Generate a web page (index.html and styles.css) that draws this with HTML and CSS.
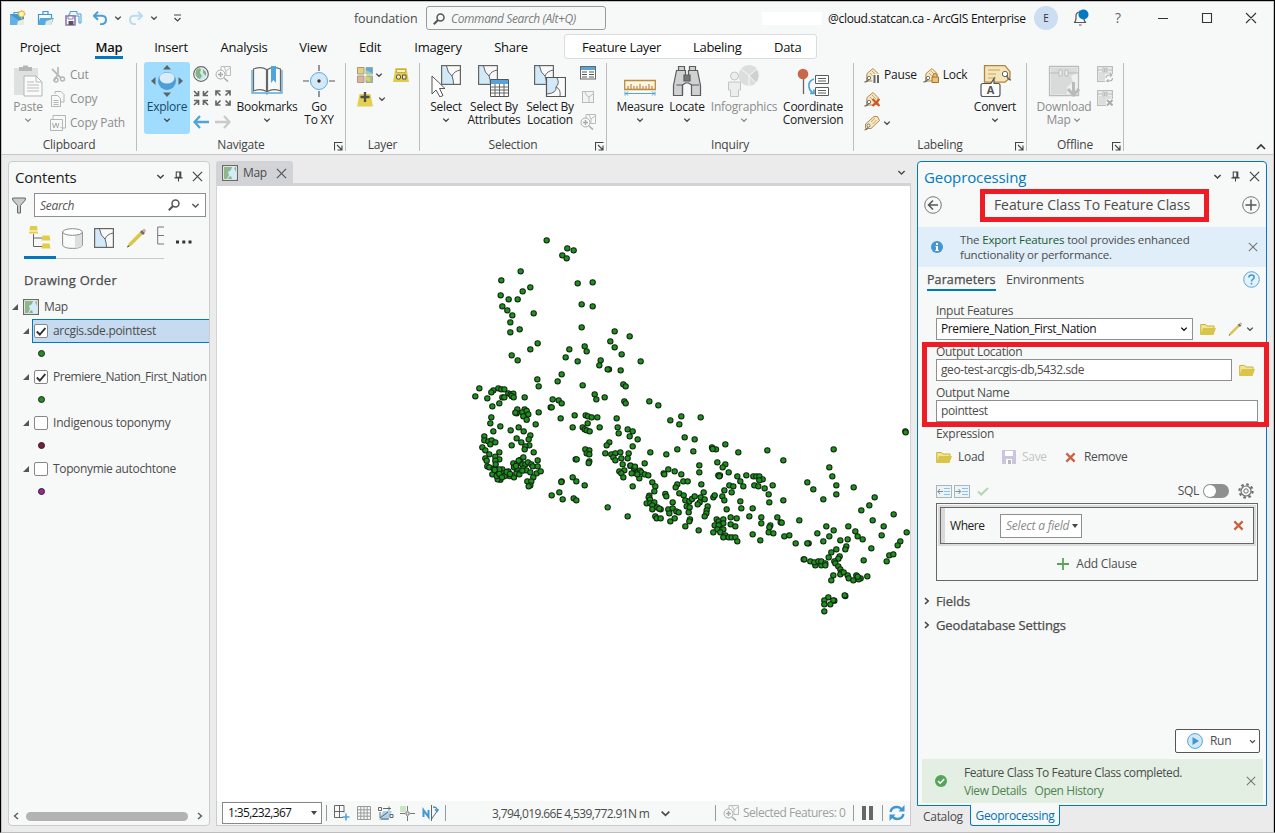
FILE: index.html
```html
<!DOCTYPE html>
<html lang="en">
<head>
<meta charset="utf-8">
<title>foundation - ArcGIS Pro</title>
<link rel="stylesheet" href="styles.css">
</head>
<body>
<svg class="defs" aria-hidden="true">
  <defs>
    <marker id="dot" viewBox="-12 -12 24 24" markerWidth="24" markerHeight="24" markerUnits="userSpaceOnUse"><circle r="8" fill="#1f8f1f" stroke="#102810" stroke-width="3.1"/></marker>
    <symbol id="chev" viewBox="0 0 8 8"><path d="M1.2 2.6 4 5.3 6.800 2.600" fill="none" stroke="currentColor" stroke-width="1.300"/></symbol>
    <symbol id="x" viewBox="0 0 12 12"><path d="M1 1 11 11M11 1 1 11" fill="none" stroke="currentColor" stroke-width="1.3"/></symbol>
    <symbol id="pin" viewBox="0 0 10 12"><path d="M2.500 1h5v6h-5zM0.500 7.500h9M5 7.500V11.500M6.500 1v6" fill="none" stroke="currentColor" stroke-width="1.200"/></symbol>
    <symbol id="mag" viewBox="0 0 12 12"><circle cx="7.500" cy="4.500" r="3.500" fill="none" stroke="currentColor" stroke-width="1.500"/><path d="M5 7 .8 11.200" stroke="currentColor" stroke-width="2"/></symbol>
    <symbol id="launch" viewBox="0 0 9 9"><path d="M8.500.5h-8v8M3 3l4.500 4.500M8 3.500V8H3.500" fill="none" stroke="#444" stroke-width="1.100"/></symbol>
    <symbol id="folder" viewBox="0 0 16 12"><path d="M.7 11V1.500h5l1.300 1.500h7v2" fill="#f2e58d" stroke="#c9b43c"/><path d="M0 12 3 5h13l-2.500 7z" fill="#d9c548"/></symbol>
    <symbol id="mapicon" viewBox="0 0 16 16"><rect x=".6" y=".6" width="14.800" height="14.800" fill="#fff" stroke="#6a6a6a" stroke-width="1.200"/><rect x="2" y="2" width="12" height="12" fill="#d3ecfa"/><path d="M2 2h8l-1 3-3 2 1 3-2 4H2zM12 3l2-1v5zM7 12l2-1 1 3H6z" fill="#8fb78c"/></symbol>
    <symbol id="parcel" viewBox="0 0 20 20"><rect x=".6" y=".6" width="18.800" height="18.800" fill="#f8f9f8"/><path d="M1 1h5q1 7 6 10l1 8H1z" fill="#d2e9f8"/><path d="M5.500 1q1 7 5.500 10 1.500 4 1.500 8M11 11q2-5 8.500-6" fill="none" stroke="#666"/><rect x=".6" y=".6" width="18.800" height="18.800" fill="none" stroke="#666" stroke-width="1.200"/></symbol>
    <symbol id="parcelgrey" viewBox="0 0 12 12"><rect x=".5" y=".5" width="11" height="11" fill="#f2f3f3" stroke="#bbb"/><path d="M3 1q1 4 4 5v5M7 6l4-3" fill="none" stroke="#bbb"/></symbol>
    <symbol id="zoomgrey" viewBox="0 0 16 16"><path d="M6 4V.5h9.500v9H11M9 1l2 4 4-3M11 5v5" fill="none" stroke="#bbb"/><circle cx="5.500" cy="8.500" r="4.500" fill="#f7f9f8" stroke="#aaa"/><path d="M3 8.500h5M5.500 6v5M9 12l4 3.500" stroke="#aaa" stroke-width="1.500"/></symbol>
    <symbol id="tag" viewBox="0 0 16 16"><path d="M3 6.500 9 1.500l5 5v7L8 14H2.500z" fill="#f6e8bf" stroke="#b38b4d"/><path d="M6 6l4 4M8 4l4 4" stroke="#c8a970"/><circle cx="5" cy="11" r="1.700" fill="#fff" stroke="#777"/><path d="M4.500 12Q4 15 .5 15" fill="none" stroke="#666" stroke-width="1.300"/></symbol>
    <symbol id="redx" viewBox="0 0 12 12"><path d="M1.500 1.500 10.500 10.500M10.500 1.500 1.500 10.500" stroke="#c96245" stroke-width="2.500"/></symbol>
    <symbol id="pencil" viewBox="0 0 20 20"><path d="M1 19.500 3 15 14.500 3.500l2.500 2.500L5.500 17.500z" fill="#dcc548"/><path d="M1 19.500 2 17l1.500 1.500z" fill="#555"/><path d="m14 4 2-2 3 3-2 2z" fill="#6c6c74"/><path d="m16.500 2 1.500-1.500L20 2.500 19 4.500z" fill="#e6a097"/></symbol>
    <symbol id="offline" viewBox="0 0 16 16"><rect x=".6" y=".6" width="14.800" height="14.800" fill="#eceded" stroke="#bdbdbd" stroke-width="1.200"/><path d="M2 6h12v8H2z" fill="#dcdddd"/><path d="M1 4h5M10 4h5M6 2v4h1.500V2zM9 2v4h1V2z" fill="none" stroke="#bbb"/></symbol>
    <symbol id="indent" viewBox="0 0 16 13"><rect x=".5" y=".5" width="15" height="12" fill="#eaf5fb" stroke="#adb3b7"/><path d="M8 3.500h6M8 6.500h6M8 9.500h6" stroke="#8fc3e4"/></symbol>
  </defs>
</svg>

<div class="window">
  <header class="titlebar">
    <div class="quick">
      <svg width="17" height="16" viewBox="0 0 17 16"><path d="M5 5V2.500h5V5" fill="none" stroke="#4a9fd8" stroke-width="1.200"/><path d="M1 4h14v11H1z" fill="#3e98d3"/><path d="M1 4 9 10l6 5H1z" fill="#65b2e2"/><path d="m8 15 1-4 6-2v6z" fill="#e7eddc"/><circle cx="12.500" cy="4" r="3" fill="#fff4a5" stroke="#d6b93d"/><path d="M12.500-.5v2M12.500 7v2M8 4h2M15.500 4h2M9.500 1l1 1M15.500 1l-1 1" stroke="#d6b93d"/></svg>
      <svg width="17" height="16" viewBox="0 0 17 16"><path d="M6 4V1.500h5V4M1.500 15V4.500h13V8" fill="none" stroke="#3e98d3" stroke-width="1.200"/><path d="M1 15 3 8h14l-3 7z" fill="#56a9dd"/><path d="m8 15 1-4 7-2-2 6z" fill="#dcebdc"/></svg>
      <svg width="17" height="16" viewBox="0 0 17 16"><path d="M5 4V1.500h7V4h4v9h-2V6H4V4z" fill="#eef7fc" stroke="#4a9fd8"/><path d="M1 6h9v9H1z" fill="#fff" stroke="#8c77b4" stroke-width="1.600"/><path d="M3 6h5v3H3z" fill="#fff" stroke="#8c77b4"/><path d="M3.500 11h5v4h-5z" fill="#555"/></svg>
      <svg width="14" height="14" viewBox="0 0 14 14"><path d="M5 .8.800 4.800 5 8.800M1 4.800h8q4 .2 4 4T9 13.200H7" fill="none" stroke="#4a9fd8" stroke-width="2"/></svg>
      <svg class="ic8" width="8" height="8"><use href="#chev"/></svg>
      <svg width="14" height="14" viewBox="0 0 14 14"><path d="m9 .8 4.200 4-4.200 4M13 4.800H5q-4 .2-4 4t4 4.400h2" fill="none" stroke="#b9dcf1" stroke-width="2"/></svg>
      <svg class="ic8" width="8" height="8"><use href="#chev"/></svg>
      <svg class="more" width="9" height="9" viewBox="0 0 9 9"><path d="M1 1h7M1.500 4l3 3 3-3" fill="none" stroke="#444" stroke-width="1.200"/></svg>
    </div>
    <span class="project">foundation</span>
    <div class="cmdsearch"><svg width="12" height="12"><use href="#mag"/></svg><span>Command Search (Alt+Q)</span></div>
    <div class="redacted"></div>
    <span class="account">@cloud.statcan.ca - ArcGIS Enterprise</span>
    <span class="avatar">E</span>
    <svg class="bell" width="18" height="18" viewBox="0 0 18 18"><path d="M2 13.500h12q-2-1-2-4.500V7q0-4-4-4T4 7v2q0 3.500-2 4.500M7 16h2.500M8 3V1.500" fill="none" stroke="#555" stroke-width="1.200"/><circle cx="11.500" cy="5.500" r="5" fill="#0079c1"/></svg>
    <span class="question">?</span>
    <svg class="wctl" width="110" height="12" viewBox="0 0 110 12"><path d="M0 6.500h10M44.500 1.500h9v9h-9zM88 1l10 10M98 1 88 11" fill="none" stroke="#333" stroke-width="1.100"/></svg>
  </header>

  <nav class="tabs">
    <span class="t t-project">Project</span><span class="t t-map">Map</span><span class="t t-insert">Insert</span><span class="t t-analysis">Analysis</span><span class="t t-view">View</span><span class="t t-edit">Edit</span><span class="t t-imagery">Imagery</span><span class="t t-share">Share</span>
    <div class="context"><span>Feature Layer</span><span>Labeling</span><span>Data</span></div>
  </nav>

  <section class="ribbon">
    <div class="group g-clip">
      <div class="tools">
        <div class="big dim w40"><svg width="30" height="32" viewBox="0 0 30 32"><path d="M1 3h24v27H1z" fill="#dfe1e1"/><path d="M6 2h4V.5h5V2h4v4H6z" fill="#b5b7b7"/><path d="M11 11h12l6 6v14H11z" fill="#fafafa" stroke="#b5b5b5"/><path d="M23 11v6h6M14 17h7M14 20h12M14 23h12M14 26h12" fill="none" stroke="#bbb"/></svg><b>Paste</b><svg class="ic8" width="8" height="8"><use href="#chev"/></svg></div>
        <div class="rows ml2 dim">
          <div><svg width="16" height="16" viewBox="0 0 16 16"><path d="M2 2 11 11M8 0v7L4 14" fill="none" stroke="#bbb" stroke-width="1.800"/><circle cx="6" cy="13" r="2" fill="none" stroke="#b5b5b5" stroke-width="1.400"/><circle cx="12.500" cy="12" r="2" fill="none" stroke="#b5b5b5" stroke-width="1.400"/></svg><i>Cut</i></div>
          <div><svg width="16" height="16" viewBox="0 0 16 16"><path d="M5 3V.5h6l3 3V11h-3M1.500 4.500h6l3 3v8h-9zM3.500 9.500h5M3.500 11.500h5M3.500 13.500h5" fill="none" stroke="#b5b5b5"/></svg><i>Copy</i></div>
          <div><svg width="16" height="16" viewBox="0 0 16 16"><path d="M3 4V.5h12.500V13H13M.5 4.500h12v11H.5z" fill="none" stroke="#b5b5b5"/><path d="m2.500 8 1.500 5 2-5 1.500 5 1.500-5M11 13v-1" fill="none" stroke="#aaa"/></svg><i>Copy Path</i></div>
        </div>
      </div>
      <div class="gname">Clipboard</div>
    </div>

    <div class="group g-nav">
      <div class="tools">
        <div class="big explore"><svg width="32" height="32" viewBox="0 0 32 32"><path d="m16 0 4 4.500h-8zM16 32l4-4.500h-8zM0 16l4.500-4v8zM32 16l-4.500-4v8z" fill="#5c6468"/><circle cx="16" cy="16" r="9" fill="#4d9ed6"/><ellipse cx="16" cy="13" rx="7.500" ry="5.500" fill="#d9edf8"/></svg><b>Explore</b><svg class="ic8" width="8" height="8"><use href="#chev"/></svg></div>
        <div class="navgrid">
          <svg viewBox="0 0 16 16"><circle cx="8" cy="8" r="7.300" fill="#fff" stroke="#666" stroke-width="1.200"/><circle cx="8" cy="8" r="6" fill="#cfe8f5"/><path d="M3 4q3-3 5-1l-1 4 2 3-2 3Q3 12 2.500 8zM10 3l3 3v4l-3-3z" fill="#86b385"/></svg>
          <svg><use href="#zoomgrey"/></svg>
          <svg viewBox="0 0 16 16"><path d="M1 1l4 4M5.500 1v4.500H1M15 1l-4 4M10.500 1v4.500H15M1 15l4-4M5.500 15v-4.500H1M15 15l-4-4M10.500 15v-4.500H15" fill="none" stroke="#666" stroke-width="1.700"/></svg>
          <svg viewBox="0 0 16 16"><path d="M5.500 5.500l-4-4M5.500 1H1v4.500M10.500 5.500l4-4M10.500 1H15v4.500M5.500 10.500l-4 4M5.500 15H1v-4.500M10.500 10.500l4 4M10.500 15H15v-4.500" fill="none" stroke="#666" stroke-width="1.700"/></svg>
          <svg viewBox="0 0 16 16"><path d="M7 2 1.500 8 7 14M2 8h14" fill="none" stroke="#4fa4da" stroke-width="2.300"/></svg>
          <svg viewBox="0 0 16 16"><path d="m9 2 5.500 6L9 14M14 8H0" fill="none" stroke="#c9cbcb" stroke-width="2.300"/></svg>
        </div>
        <div class="big w60 ml6"><svg width="32" height="32" viewBox="0 0 32 32"><path d="M1 5v23h14l1 1 1-1h14V5" fill="#fff" stroke="#5ba8dc" stroke-width="1.300"/><path d="M2.500 4q8-3 13 .5v22Q10 23 2.500 26zM29.500 4q-8-3-13 .5v22Q22 23 29.500 26z" fill="#f7f8f8" stroke="#666" stroke-width="1.200"/><path d="M20 1h5v17l-2.500-3-2.500 3z" fill="#4fa4da"/></svg><b>Bookmarks</b><svg class="ic8" width="8" height="8"><use href="#chev"/></svg></div>
        <div class="big w40 ml2"><svg width="32" height="32" viewBox="0 0 32 32"><circle cx="16" cy="16" r="8.500" fill="#d3e9f8" stroke="#62abda"/><path d="M16 0v6M16 26v6M0 16h6M26 16h6" stroke="#555" stroke-width="1.200"/><circle cx="16" cy="16" r="1.700" fill="#333"/></svg><b>Go<br>To XY</b></div>
      </div>
      <div class="gname">Navigate<svg class="launch" width="9" height="9"><use href="#launch"/></svg></div>
    </div>

    <div class="group g-layer">
      <div class="tools">
        <div class="rows">
          <div><svg width="16" height="16" viewBox="0 0 16 16"><path d="M.5.5h6.500v6.500H.5z" fill="#e2d08a" stroke="#a79c66"/><path d="M9 .5h6.500v6.500H9z" fill="#5aa9d8" stroke="#9aa"/><path d="M9 7V3l6 3v1z" fill="#a6cba2"/><path d="M.5 9h6.500v6.500H.5z" fill="#dcb69b" stroke="#a98"/><path d="M9 9h6.500v6.500H9z" fill="#9cc496" stroke="#9a9"/><path d="m9 9 4 2v4l-4-2z" fill="#e6cf55"/></svg><svg class="ic8 ml2" width="8" height="8"><use href="#chev"/></svg><svg class="ml10" width="16" height="16" viewBox="0 0 16 16"><path d="M2.500 1h11L16 15H0z" fill="#e0cb4f"/><path d="M3.500 2.500h9v3h-9z" fill="#fbf3c4" stroke="#c6ae39"/><circle cx="5.500" cy="10" r="2.200" fill="#f3e9a8" stroke="#555"/><path d="M9.500 8h3.500v4H9.500z" fill="#f3e9a8" stroke="#555"/></svg></div>
          <div><svg width="16" height="15" viewBox="0 0 16 15"><path d="M2.500 2h11L16 14.500H0z" fill="#e3cf50"/><path d="M8 0v10M3.500 5h9" stroke="#4c4c4c" stroke-width="2.300"/></svg><svg class="ic8 ml5" width="8" height="8"><use href="#chev"/></svg></div>
        </div>
      </div>
      <div class="gname">Layer</div>
    </div>

    <div class="group g-sel">
      <div class="tools">
        <div class="big w40"><svg width="32" height="32" viewBox="0 0 32 32"><use href="#parcel" x="11" y="0" width="20" height="20"/><path d="M2 11v18l4-4 4 7 3-1.500-3.500-7H15z" fill="#fff" stroke="#555"/></svg><b>Select</b><svg class="ic8" width="8" height="8"><use href="#chev"/></svg></div>
        <div class="big w54 ml1"><svg width="32" height="32" viewBox="0 0 32 32"><use href="#parcel" width="20" height="20"/><path d="M12.500 14.500h18v17h-18z" fill="#fff" stroke="#555"/><path d="M13 15h17v4H13z" fill="#57a5d8"/><path d="M13 22h17M13 25h17M13 28h17M17 19v12M21.500 19v12M26 19v12" stroke="#666"/></svg><b>Select By<br>Attributes</b></div>
        <div class="big w50 ml4"><svg width="32" height="32" viewBox="0 0 32 32"><use href="#parcel" width="20" height="20"/><path d="M12.500 12.500h19v19h-19z" fill="#fafafa"/><path d="M13 13h10q3 5-1 9 1 6-9 7z" fill="#d2e9f8"/><path d="M23 13q3 5-1 9 1 6-9 7M22 22q5 2 4 9" fill="none" stroke="#666"/><path d="M12.500 12.500h19v19h-19z" fill="none" stroke="#555" stroke-width="1.200"/></svg><b>Select By<br>Location</b></div>
        <div class="stack ml5">
          <svg width="16" height="14" viewBox="0 0 16 14"><rect x=".5" y=".5" width="15" height="12.500" fill="#fff" stroke="#666"/><path d="M1 1h14v3H1z" fill="#57a5d8"/><path d="M2 6h5M2 8.500h5M2 11h5M9 6h5M9 8.500h5M9 11h5" stroke="#555"/></svg>
          <svg width="12" height="12"><use href="#parcelgrey"/></svg>
          <svg width="16" height="16"><use href="#zoomgrey"/></svg>
        </div>
      </div>
      <div class="gname">Selection<svg class="launch" width="9" height="9"><use href="#launch"/></svg></div>
    </div>

    <div class="group g-inq">
      <div class="tools">
        <div class="big w50"><svg width="32" height="32" viewBox="0 0 32 32"><path d="M.7 15.500h30.600v9H.7z" fill="#fdf5e0" stroke="#c08a3c" stroke-width="1.300"/><path d="M4 24v-3M7 24v-5M10 24v-3M13 24v-3M16 24v-5M19 24v-3M22 24v-3M25 24v-5M28 24v-3" stroke="#a5742f"/><path d="M1 26.500v4M31 26.500v4M1 28.500h30M4 26.500l-2 2 2 2M28 26.500l2 2-2 2" fill="none" stroke="#58a6d8"/></svg><b>Measure</b><svg class="ic8" width="8" height="8"><use href="#chev"/></svg></div>
        <div class="big w40 ml2"><svg width="32" height="32" viewBox="0 0 32 32"><g fill="#cfd1d2" stroke="#5c5c5c" stroke-width="1.200"><path d="M7.500 1.500h6v4h-6zM18.500 1.500h6v4h-6z"/><path d="M5.500 5.500h9V12h3V5.500h9l3 15v10h-9V20l-3-2h-3l-3 2v10.500h-9v-10z"/><path d="M5.500 20h6v10M20 20h8" fill="none"/><path d="M13 10h6v6h-6z" fill="#777"/></g></svg><b>Locate</b><svg class="ic8" width="8" height="8"><use href="#chev"/></svg></div>
        <div class="big dim w68 ml3"><svg width="32" height="32" viewBox="0 0 32 32"><circle cx="21" cy="10.500" r="10.500" fill="#dcdede"/><path d="M21 10.500 29 4a10.500 10.500 0 0 1-1 14zM21 10.500 13 4M21 10.500V21" fill="#cfd1d1" stroke="#f7f9f8"/><circle cx="6.500" cy="11" r="4" fill="#eceded" stroke="#c4c4c4"/><path d="M.5 17h12v8h-2v6.500h-8V25h-2z" fill="#eceded" stroke="#c4c4c4"/></svg><b>Infographics</b><svg class="ic8" width="8" height="8"><use href="#chev"/></svg></div>
        <div class="big w62 ml4"><svg width="32" height="32" viewBox="0 0 32 32"><path d="M6.500 13v16" stroke="#666" stroke-width="1.300"/><circle cx="6" cy="9" r="5.300" fill="#c96749"/><path d="M18.500 10.500h13v8h-13zM18.500 22.500h13v8h-13zM21 13.500h8M21 16h8M21 25.500h8M21 28h8" fill="#fff" stroke="#5c5c5c"/><path d="M17 14q-6 2-5 8 1 5 5 6M13 28.500h4v-4" fill="none" stroke="#4fa4da" stroke-width="1.700"/></svg><b>Coordinate<br>Conversion</b></div>
      </div>
      <div class="gname">Inquiry</div>
    </div>

    <div class="group g-lab">
      <div class="tools">
        <div class="rows w108">
          <div><svg width="16" height="16" viewBox="0 0 16 16"><use href="#tag"/><path d="M8.500 7h7v9h-7z" fill="#f7f9f8"/><path d="M10.500 8v8M14 8v8" stroke="#666" stroke-width="2"/></svg><i class="dark">Pause</i><svg class="ml6" width="16" height="16" viewBox="0 0 16 16"><use href="#tag"/><path d="M10 10V8.500q0-2 2-2t2 2V10M9 10h6.500v5.500H9z" fill="#e9c27b" stroke="#a4722f"/></svg><i class="dark">Lock</i></div>
          <div><svg width="16" height="16" viewBox="0 0 16 16"><use href="#tag"/><path d="m8.500 8 7 7M15.500 8l-7 7" stroke="#d25429" stroke-width="2.200"/></svg></div>
          <div><svg width="16" height="16" viewBox="0 0 16 16"><path d="M1.500 9 10 1.500h3.500l2 4L7 13.500H1.500z" fill="#f6e8bf" stroke="#b38b4d"/><path d="m7 7 4-4M8.500 9l4-4" stroke="#c8a970"/><circle cx="4.500" cy="10.500" r="1.500" fill="#fff" stroke="#777"/><path d="M4 12q0 3-3.500 3" fill="none" stroke="#666"/></svg><svg class="ic8 ml3" width="8" height="8"><use href="#chev"/></svg></div>
        </div>
        <div class="big w46"><svg width="32" height="32" viewBox="0 0 32 32"><path d="M5.500.7H26l5 6v6l-5 4.500H5.500z" fill="#f5e6b8" stroke="#b3843f" stroke-width="1.300"/><path d="M9 5h12M9 9h8M9 13h8" stroke="#c3a468"/><circle cx="26" cy="9" r="2.700" fill="#fff" stroke="#666"/><path d="M28 10q0 4 4 5" fill="none" stroke="#666" stroke-width="1.500"/><path d="M4 18.500h8l3-5v5h4q2 0 2 2v9q0 2-2 2H4q-2 0-2-2v-9q0-2 2-2z" fill="#fff" stroke="#555" stroke-width="1.200"/><text x="11.500" y="29" text-anchor="middle" class="glyphA">A</text></svg><b>Convert</b><svg class="ic8" width="8" height="8"><use href="#chev"/></svg></div>
      </div>
      <div class="gname">Labeling<svg class="launch" width="9" height="9"><use href="#launch"/></svg></div>
    </div>

    <div class="group g-off">
      <div class="tools">
        <div class="big dim w60"><svg width="32" height="32" viewBox="0 0 32 32"><path d="M1.500 1.500h29v29h-29z" fill="#eff0f0" stroke="#bbb" stroke-width="1.300"/><path d="M3 3h26v5l-6 3 2 6-6 5v7H3z" fill="#d9dbdb"/><path d="M2 8h9M20 8h10M11 5v6h3V5zM17 5v6h3V5z" fill="#eff0f0" stroke="#bbb"/><path d="M25.500 17v12M20 24l5.500 6 5.500-6" fill="none" stroke="#b9bbbb" stroke-width="3"/></svg><b>Download<br>Map <svg class="ic8" width="8" height="8"><use href="#chev"/></svg></b></div>
        <div class="stack off ml3">
          <svg width="16" height="16" viewBox="0 0 16 16"><use href="#offline"/><path d="M8 8h8v8H8z" fill="#f7f9f8"/><path d="M9 12q0-3 3-3h2M15.500 12q0 3-3 3h-2M13 7.500 14.800 9 13 10.800M11.500 13.500 9.700 15l1.800 1.500" fill="none" stroke="#b0b0b0" stroke-width="1.200"/></svg>
          <svg width="16" height="16" viewBox="0 0 16 16"><use href="#offline"/><path d="M9 9h7v7H9z" fill="#f7f9f8"/><path d="m10 10 5.500 5.500M15.500 10 10 15.500" stroke="#aaa" stroke-width="2"/></svg>
        </div>
      </div>
      <div class="gname">Offline<svg class="launch" width="9" height="9"><use href="#launch"/></svg></div>
    </div>
    <svg class="collapse" width="10" height="7" viewBox="0 0 10 7"><path d="m1 6 4-4 4 4" fill="none" stroke="#333" stroke-width="1.600"/></svg>
  </section>

  <main class="work">
    <aside class="contents">
      <div class="phead"><h2>Contents</h2><svg width="9" height="9"><use href="#chev"/></svg><svg width="9" height="11"><use href="#pin"/></svg><svg width="11" height="11"><use href="#x"/></svg></div>
      <div class="searchrow"><svg width="14" height="17" viewBox="0 0 14 17"><path d="M.7 1h12.600v2L8.500 8.500v7.500h-3V8.500L.7 3z" fill="#c9cbcd" stroke="#666"/></svg><div class="search"><em>Search</em><svg width="12" height="12"><use href="#mag"/></svg><svg width="9" height="9"><use href="#chev"/></svg></div></div>
      <div class="listby">
        <div class="lb on"><svg width="23" height="23" viewBox="0 0 23 23"><path d="M5.500 8v12.500H14M5.500 12H14" fill="none" stroke="#666"/><g fill="#e3cd48"><path d="M2 0h7l1 7.500H1zM14.500 9.500h7l1 5h-9zM14.500 17.500h7l1 5h-9z"/></g><path d="M1 5h9" stroke="#fff"/></svg></div>
        <div class="lb"><svg width="21" height="21" viewBox="0 0 21 21"><path d="M.6 4v13q1 3.400 9.900 3.400T20.400 17V4" fill="#fafafa" stroke="#8b8b8b"/><path d="M13 7v13q6 0 7-3V4.500z" fill="#dcdedf"/><ellipse cx="10.500" cy="4" rx="9.900" ry="3.300" fill="#fff" stroke="#8b8b8b"/></svg></div>
        <div class="lb"><svg width="20" height="20"><use href="#parcel"/></svg></div>
        <div class="lb"><svg width="20" height="20"><use href="#pencil"/></svg></div>
        <div class="lb last"><svg width="7" height="19" viewBox="0 0 7 19"><path d="M7 1H.7v17H7M.7 9.500H7" fill="none" stroke="#777"/></svg></div>
        <svg class="dots" width="16" height="4" viewBox="0 0 16 4"><path d="M0 .5h3v3H0zM6.300 .5h3v3h-3zM12.500 .5h3v3h-3z" fill="#333"/></svg>
      </div>
      <h3>Drawing Order</h3>
      <div class="tree">
        <div class="node root"><span class="tri"></span><svg width="16" height="16"><use href="#mapicon"/></svg><span>Map</span></div>
        <div class="node sel"><span class="tri"></span><div class="lay"><span class="cb"><svg width="10" height="9" viewBox="0 0 10 9"><path d="m.8 4.500 3 3L9.300 1" fill="none" stroke="#333" stroke-width="1.900"/></svg></span><span>arcgis.sde.pointtest</span></div></div>
        <div class="sym"><span class="green"></span></div>
        <div class="node"><span class="tri"></span><div class="lay"><span class="cb"><svg width="10" height="9" viewBox="0 0 10 9"><path d="m.8 4.500 3 3L9.300 1" fill="none" stroke="#333" stroke-width="1.900"/></svg></span><span class="long">Premiere_Nation_First_Nation</span></div></div>
        <div class="sym"><span class="green"></span></div>
        <div class="node"><span class="tri"></span><div class="lay"><span class="cb"></span><span class="sp2">Indigenous toponymy</span></div></div>
        <div class="sym"><span class="maroon"></span></div>
        <div class="node"><span class="tri"></span><div class="lay"><span class="cb"></span><span class="sp3">Toponymie autochtone</span></div></div>
        <div class="sym"><span class="purple"></span></div>
      </div>
      <div class="hscroll"><svg width="6" height="8" viewBox="0 0 6 8"><path d="M5 1 1.500 4 5 7" fill="none" stroke="#555" stroke-width="1.300"/></svg><span></span><svg width="6" height="8" viewBox="0 0 6 8"><path d="m1 1 3.500 3L1 7" fill="none" stroke="#555" stroke-width="1.300"/></svg></div>
    </aside>

    <section class="mapview">
      <div class="vtabs"><div class="vtab"><svg width="16" height="16"><use href="#mapicon"/></svg><span>Map</span><svg width="11" height="11"><use href="#x"/></svg></div><svg class="vchev" width="9" height="9"><use href="#chev"/></svg></div>
      <div class="canvas">
        <svg width="693" height="615" viewBox="217 186 693 615">
          <g fill="none" stroke="none">
            <g transform="translate(460 225) scale(.33333)"><polyline class="pts" points="260,46 322,70 341,76 307,91 320,100 182,139 124,166 211,187 188,199 122,211 146,223 173,223 127,244 142,256 157,271 221,265 151,292 151,322 179,313 233,355 211,373 155,391 173,406 353,175 398,172 365,238 398,244 365,307 464,319 509,334 451,349 464,367 485,388 542,409 374,364 380,379 328,373 317,397 353,409 422,406 418,421 447,433 443,433 482,436 305,448"/></g>
            <g transform="translate(460 370) scale(.33333)"><polyline class="pts" points="232,28 236,49 293,34 368,46 490,43 497,49 404,73 434,82 409,88 58,55 46,79 82,85 115,55 100,61 94,67 124,58 133,58 127,82 133,82 145,70 152,73 160,71 155,78 161,82 194,82 118,100 97,109 278,88 296,91 305,100 272,112 275,112 493,94 497,100 236,127 302,145 344,136 377,136 384,139 395,142 412,142 383,160 368,172 338,172 374,178 380,181 389,184 419,172 470,145 473,172 476,190 503,178 509,199 172,118 194,118 170,130 187,127 200,123 205,133 190,139 200,149 166,128 94,142 91,160 121,169 100,184 152,181 176,172 191,184 227,163 73,199 73,211 85,214 95,211 91,223 106,217 170,205 211,196 206,208 184,217 155,226 208,226 196,229 194,238 221,247 67,232 76,241 88,253 118,247 106,260 118,268 76,265 80,272 106,272 82,289 88,292 101,296 107,283 97,313 112,307 115,319 121,329 113,328 127,298 130,310 139,313 118,298 145,304 149,318 162,322 169,310 178,313 160,280 172,280 181,270 190,262 187,283 196,283 190,295 199,301 204,277 214,283 218,289 233,271 233,289 230,310 242,304 211,307 220,322 202,334 214,334 211,346 206,349 187,302 170,296 162,292 176,272 168,288 134,318 140,306 150,312 110,318 104,300 118,312 126,322 376,238 388,241 380,250 388,253 388,274 386,279 347,268 350,268 448,217 440,226 436,250 454,253 466,250 481,247 506,250 460,262 466,271 484,265 503,265 488,283 478,304 493,301 484,310 490,322 511,287 338,322 349,334 374,346 305,334 304,336 298,367 275,376 308,388 341,385 349,391 443,412 503,439"/></g>
            <g transform="translate(630 380) scale(.33333)"><polyline class="pts" points="58,64 85,76 154,109 121,121 148,133 212,112 8,154 23,178 8,199 61,217 109,223 142,208 164,172 194,178 190,214 246,202 258,208 248,207 286,193 325,217 412,211 460,241 44,250 2,257 12,265 20,280 15,260 30,272 34,277 44,283 55,286 28,295 22,283 5,280 8,319 67,307 76,319 73,334 58,347 56,352 60,359 50,370 61,370 73,367 67,376 67,388 82,382 92,388 88,386 76,409 80,415 92,415 115,268 134,274 101,280 103,283 154,283 160,304 173,304 142,313 137,322 214,313 208,256 208,277 148,340 161,346 106,342 109,349 128,367 166,361 178,364 186,357 194,349 212,352 221,337 224,358 209,367 203,373 170,379 179,382 176,397 233,379 230,391 229,400 224,409 115,388 128,385 118,400 139,394 146,397 121,424 134,415 166,439 180,418 178,424 206,451 250,352 254,346 262,247 286,253 278,262 296,277 265,286 270,286 268,289 322,289 331,304 340,319 298,316 310,319 305,337 283,331 277,349 283,361 349,286 370,289 379,289 388,289 398,298 388,301 373,316 385,319 404,325 428,316 416,343 418,367 460,361 331,364 334,385 368,385 290,388 358,409 302,412 320,415 260,418 266,424 280,418 254,436 271,433 280,430 266,436 302,433 316,439 262,448 280,448 250,457 271,457 286,466 280,472 296,472 305,472 316,472 322,484 368,463 391,481 394,412 394,430 421,436 418,442 416,457 430,460 442,412 452,427 455,428 508,421 463,469 478,466 497,490 536,490 532,490 532,307 550,328 580,358 611,208 598,262 607,289 619,316 619,343 671,322 694,391 718,376 734,352 791,403 728,421 761,439 755,466 830,457 811,484 803,496 778,526 790,523 770,544 724,505 701,541 589,439 562,460 598,469 611,451 580,484 655,439 676,454 683,469 698,478 653,478 631,481 649,499 646,508 619,508 604,517 596,532 629,529 625,536 613,544 616,550 625,559 521,538 523,538 541,544 556,556 553,547 565,544 574,556 574,544 586,550 586,556 631,568 634,577 631,583 641,577 653,586 656,595 670,601 679,586 692,595 686,598 683,590 712,589 610,586 604,601 646,648 644,646 595,652 583,661 613,662 610,661 601,673 583,673 583,694 826,154 827,157"/></g>
          </g>
        </svg>
      </div>
      <div class="status">
        <div class="scale"><span>1:35,232,367</span><i class="down"></i></div>
        <i class="sep s1"></i>
        <svg class="a1" width="16" height="16" viewBox="0 0 16 16"><path d="M10 7.500V.5H.5v12H9M.5 6.500H10M5.500.5v12" fill="none" stroke="#666"/><path d="M12 8.500v7M8.500 12h7" stroke="#4fa4da" stroke-width="1.600"/></svg>
        <svg class="a2" width="14" height="14" viewBox="0 0 14 14"><path d="M.5.5h13v13H.5zM.5 3.800h13M.5 7h13M.5 10.200h13M3.800.5v13M7 .5v13M10.200.5v13" fill="none" stroke="#999"/></svg>
        <svg class="a3" width="16" height="15" viewBox="0 0 16 15"><path d="M1 14 5 5h9L10 14z" fill="#a8d2ee"/><path d="M.5 1.500h3v3h-3zM12 8.500h3v3h-3zM5 2.500h8M11 .5v4M2 6v6l8-6M3 13h8" fill="none" stroke="#666"/></svg>
        <svg class="a4" width="15" height="15" viewBox="0 0 15 15"><path d="M0 0h6v6H0z" fill="#c9e7c5"/><path d="M7.500 0v5M7.500 10v5M0 7.500h5M10 7.500h5M6 6h3v3H6z" fill="none" stroke="#777"/></svg>
        <svg class="a5" width="17" height="16" viewBox="0 0 17 16"><path d="M1.500 12V5l5 7V5" fill="none" stroke="#4296d2" stroke-width="2"/><path d="M9.500 0v16" stroke="#666"/><path d="M9.500 14 16 5" stroke="#666"/><path d="M11 2q4 0 4 3M13 4.500l2 2 1.500-2.500" fill="none" stroke="#4296d2" stroke-width="1.300"/></svg>
        <i class="sep s2"></i>
        <span class="coords">3,794,019.66E 4,539,772.91N m</span>
        <svg class="cchev" width="11" height="11"><use href="#chev"/></svg>
        <i class="sep s3"></i>
        <div class="selfeat"><svg width="16" height="16"><use href="#zoomgrey"/></svg><span>Selected Features: 0</span></div>
        <i class="sep s4"></i>
        <svg class="pause" width="11" height="14" viewBox="0 0 11 14"><path d="M0 0h4v14H0zM7 0h4v14H7z" fill="#666"/></svg>
        <i class="sep s5"></i>
        <svg class="refresh" width="16" height="16" viewBox="0 0 16 16"><path d="M1.500 7q1-5 6.500-5 3 0 5 3M14.500 9q-1 5-6.500 5-3 0-5-3" fill="none" stroke="#4296d2" stroke-width="2.300"/><path d="M15.500 0v6.500H9.500zM.5 16V9.500h6z" fill="#4296d2"/></svg>
      </div>
    </section>

    <div class="right">
      <aside class="geo">
        <div class="phead"><h2>Geoprocessing</h2><svg width="9" height="9"><use href="#chev"/></svg><svg width="9" height="11"><use href="#pin"/></svg><svg width="11" height="11"><use href="#x"/></svg></div>
        <div class="gtitle"><svg width="18" height="18" viewBox="0 0 18 18"><circle cx="9" cy="9" r="8.300" fill="none" stroke="#777"/><path d="M9 4.500 4.500 9 9 13.500M5 9h9" fill="none" stroke="#555" stroke-width="1.500"/></svg><h1>Feature Class To Feature Class</h1><svg width="18" height="18" viewBox="0 0 18 18"><circle cx="9" cy="9" r="8.300" fill="none" stroke="#777"/><path d="M9 3.500v11M3.500 9h11" stroke="#555" stroke-width="1.500"/></svg></div>
        <div class="info"><svg width="12" height="12" viewBox="0 0 12 12"><circle cx="6" cy="6" r="6" fill="#4296d2"/><path d="M5 2h2v2H5zM4.500 5H7v4h.7v1H4.300V9H5V6h-.5z" fill="#fff"/></svg><p>The <span class="lnk">Export Features</span> tool provides enhanced<br>functionality or performance.</p><svg class="dimx" width="10" height="10"><use href="#x"/></svg></div>
        <div class="ptabs"><span class="on">Parameters</span><span class="env">Environments</span><svg width="17" height="17" viewBox="0 0 17 17"><circle cx="8.500" cy="8.500" r="7.800" fill="#e4f2fb" stroke="#58a7da"/><path d="M5.800 6.500Q6 4 8.500 4t2.700 2.200q0 1.300-1.500 2.200Q8.500 9.200 8.500 10.500M8.500 11.800v1.600" fill="none" stroke="#3e98d3" stroke-width="1.500"/></svg></div>
        <div class="form">
          <label>Input Features</label>
          <div class="frow"><div class="inp combo black"><span>Premiere_Nation_First_Nation</span><svg width="8" height="8"><use href="#chev"/></svg></div><svg class="fold" width="16" height="12"><use href="#folder"/></svg><svg class="pen" width="14" height="14"><use href="#pencil"/></svg><svg class="pch" width="8" height="8"><use href="#chev"/></svg></div>
          <label>Output Location</label>
          <div class="frow"><div class="inp loc">geo-test-arcgis-db,5432.sde</div><svg class="fold" width="16" height="12"><use href="#folder"/></svg></div>
          <label>Output Name</label>
          <div class="frow"><div class="inp full">pointtest</div></div>
          <label>Expression</label>
          <div class="actions"><svg width="16" height="12"><use href="#folder"/></svg><span class="ld">Load</span><svg width="14" height="14" viewBox="0 0 14 14"><path d="M0 0h14v14H0z" fill="#cbc5df"/><path d="M3 1h8v5H3zM4 9h6v5H4z" fill="#fff"/><path d="M6 10h3v4H6z" fill="#b9b9b9"/></svg><span class="sv">Save</span><svg width="11" height="11"><use href="#redx"/></svg><span class="rm">Remove</span></div>
          <div class="sqlrow"><svg width="16" height="13" viewBox="0 0 16 13"><use href="#indent"/><path d="M7 6.500H2M4 4 1.800 6.500 4 9" fill="none" stroke="#888"/></svg><svg class="ml2" width="16" height="13" viewBox="0 0 16 13"><use href="#indent"/><path d="M1.500 6.500h5M4.500 4 6.700 6.500 4.500 9" fill="none" stroke="#888"/></svg><svg class="chk" width="12" height="9" viewBox="0 0 12 9"><path d="m1 4.500 3.200 3L11 1" fill="none" stroke="#b5d6b5" stroke-width="2"/></svg><span class="sql">SQL</span><span class="toggle"></span><svg class="gear" width="16" height="16" viewBox="0 0 16 16"><circle cx="8" cy="8" r="6.600" fill="none" stroke="#707070" stroke-width="2.200" stroke-dasharray="2.600 2.584"/><circle cx="8" cy="8" r="5" fill="#f7f9f8" stroke="#707070" stroke-width="1.200"/><circle cx="8" cy="8" r="2.200" fill="none" stroke="#707070"/></svg></div>
          <div class="clauses">
            <div class="clause"><span class="grip"></span><span class="where">Where</span><span class="field"><em>Select a field</em><i class="down"></i></span><svg width="11" height="11"><use href="#redx"/></svg></div>
            <div class="add"><svg width="12" height="12" viewBox="0 0 12 12"><path d="M6 0v12M0 6h12" stroke="#5aa45c" stroke-width="1.800"/></svg><span>Add Clause</span></div>
          </div>
        </div>
        <div class="sect"><svg width="6" height="8" viewBox="0 0 6 8"><path d="m1 1 3.200 3L1 7" fill="none" stroke="#444" stroke-width="1.600"/></svg><span>Fields</span></div>
        <div class="sect"><svg width="6" height="8" viewBox="0 0 6 8"><path d="m1 1 3.200 3L1 7" fill="none" stroke="#444" stroke-width="1.600"/></svg><span class="gdb">Geodatabase Settings</span></div>
        <div class="spacer"></div>
        <div class="run"><svg width="16" height="16" viewBox="0 0 16 16"><circle cx="8" cy="8" r="7.400" fill="#d3e9f8" stroke="#4fa4da"/><path d="M5.500 4 12 8l-6.500 4z" fill="#3e98d3"/></svg><span>Run</span><svg width="7" height="7"><use href="#chev"/></svg></div>
        <div class="done"><svg width="12" height="12" viewBox="0 0 12 12"><circle cx="6" cy="6" r="6" fill="#56a35a"/><path d="m3 6 2.200 2.200L9.200 4" fill="none" stroke="#fff" stroke-width="1.600"/></svg><div><p>Feature Class To Feature Class completed.</p><p class="links"><a>View Details</a><a>Open History</a></p></div><svg class="dimx" width="10" height="10"><use href="#x"/></svg></div>
        <div class="mark m1"></div>
        <div class="mark m2"></div>
      </aside>
      <div class="ptabsb"><span class="cat">Catalog</span><span class="gp">Geoprocessing</span></div>
    </div>
  </main>
</div>
</body>
</html>
```
FILE: styles.css
```css
* { box-sizing: border-box; }
body { margin: 0; font-family: "Open Sans", "Noto Sans", sans-serif; font-size: 12px; color: #4c4c4c; letter-spacing: -0.3px; line-height: 14px; }
h1, h2, h3, p { margin: 0; font-weight: 400; }
svg { flex: none; display: block; }
.defs { position: absolute; width: 0; height: 0; }
.window { width: 1275px; height: 833px; border: 1px solid #000; border-bottom: 1px solid #bdbdbd; background: #ebebeb; display: flex; flex-direction: column; overflow: hidden; box-shadow: inset 1px 1px 0 #c4c4c4, inset -1px 0 0 #c4c4c4; padding: 1px; }
.ic8 { display: inline-block; color: #444; }
.ml1 { margin-left: 1px; } .ml2 { margin-left: 2px; } .ml3 { margin-left: 3px; } .ml4 { margin-left: 4px; }
.ml5 { margin-left: 5px; } .ml6 { margin-left: 6px; } .ml10 { margin-left: 10px; }
.w40 { width: 40px; } .w46 { width: 46px; } .w50 { width: 50px; } .w54 { width: 54px; } .w60 { width: 60px; } .w62 { width: 62px; } .w68 { width: 68px; } .w108 { width: 108px; }

/* title bar */
.titlebar { height: 32px; flex: none; background: #f7f9f8; display: flex; align-items: center; padding-left: 7px; white-space: nowrap; }
.quick { display: flex; align-items: center; width: 345px; }
.quick svg + svg { margin-left: 11px; }
.quick svg.ic8, .quick svg.ic8 + svg { margin-left: 7px; }
.quick svg.ic8 + svg.more { margin-left: 15px; }
.project { font-size: 12.5px; width: 72px; letter-spacing: -0.1px; line-height: 18px; padding-top: 2px; }
.cmdsearch { width: 180px; height: 24px; border: 1px solid #9b9b9b; border-radius: 3px; display: flex; align-items: center; padding: 1px 0 0 6px; gap: 6px; font-style: italic; font-size: 12px; letter-spacing: -0.4px; color: #7c7c7c; }
.cmdsearch svg { color: #555; }
.redacted { width: 60px; height: 13px; background: #fff; margin-left: 156px; }
.account { margin-left: 6px; width: 206px; color: #111; padding-top: 2px; }
.avatar { width: 24px; height: 24px; border-radius: 50%; background: #cbdef2; color: #333; font-size: 10px; text-align: center; line-height: 24px; }
.bell { margin-left: 14px; }
.question { margin-left: 25px; font-size: 14px; color: #666; width: 9px; }
.wctl { margin-left: 34px; }

/* tabs */
.tabs { height: 28px; flex: none; background: #f7f9f8; display: flex; padding-left: 13px; color: #111; font-size: 13px; letter-spacing: -0.25px; }
.t { height: 25px; line-height: 27px; text-align: center; white-space: nowrap; }
.t-project { width: 50px; } .t-map { width: 28px; margin-left: 30px; font-weight: 600; border-bottom: 3px solid #0079c1; }
.t-insert { width: 40px; margin-left: 28px; } .t-analysis { width: 50px; margin-left: 28px; } .t-view { width: 30px; margin-left: 29px; }
.t-edit { width: 26px; margin-left: 29px; } .t-imagery { width: 52px; margin-left: 29px; } .t-share { width: 36px; margin-left: 29px; }
.context { margin-left: 35px; width: 253px; height: 25px; background: #fff; border: 1px solid #dcdcdc; border-radius: 3px; line-height: 25px; display: flex; padding-left: 17px; white-space: nowrap; }
.context span { letter-spacing: -0.3px; }
.context span:nth-child(1) { width: 111px; } .context span:nth-child(2) { width: 81px; }

/* ribbon */
.ribbon { height: 93px; flex: none; background: #f7f9f8; border-bottom: 1px solid #c6c6c6; display: flex; color: #1a1a1a; }
.group { height: 88px; margin-top: 1px; border-right: 1px solid #bdbdbd; display: flex; flex-direction: column; }
.g-clip { width: 135px; } .g-nav { width: 209px; } .g-layer { width: 74px; } .g-sel { width: 187px; } .g-inq { width: 247px; } .g-lab { width: 173px; } .g-off { width: 97px; }
.tools { height: 72px; display: flex; padding-left: 6px; flex: none; }
.g-nav .tools, .g-off .tools { padding-left: 7px; } .g-layer .tools { padding-left: 11px; } .g-inq .tools { padding-left: 8px; } .g-lab .tools { padding-left: 10px; }
.big { display: flex; flex-direction: column; align-items: center; padding-top: 2px; height: 72px; flex: none; white-space: nowrap; text-align: center; }
.big b { font-weight: 400; line-height: 13px; margin-top: 3px; letter-spacing: -0.25px; }
.big > .ic8 { margin-top: 3px; }
.big b .ic8 { vertical-align: 0; }
.explore { width: 46px; background: #9fdcfd; border-radius: 3px; margin-top: -1px; padding-top: 3px; color: #174a6a; }
.dim { color: #8c8c8c; } .dim .ic8 { color: #8c8c8c; }
.rows > div { height: 24px; display: flex; align-items: center; white-space: nowrap; }
.rows i { font-style: normal; margin-left: 4px; letter-spacing: -0.2px; }
.dark { color: #1a1a1a; }
.navgrid { display: grid; grid-template-columns: 16px 16px; column-gap: 6px; row-gap: 8px; margin: 3px 0 0 3px; grid-auto-rows: 16px; }
.navgrid svg { width: 16px; height: 16px; }
.stack { width: 16px; display: flex; flex-direction: column; align-items: center; gap: 11px; padding-top: 3px; }
.stack.off { gap: 8px; }
.gname { position: relative; text-align: center; height: 16px; color: #444; letter-spacing: -0.2px; line-height: 16px; padding-top: 2px; flex: none; }
.launch { position: absolute; right: 2px; top: 7px; }
.collapse { margin: 81px 0 0 132px; }
.glyphA { font: 700 11px "Open Sans", sans-serif; fill: #555; }

/* work area */
.work { flex: 1; display: flex; padding: 6px 5px 5px 6px; }
.contents { width: 202px; height: 665px; border: 1px solid #ccc; border-radius: 4px; background: #f7f9f8; display: flex; flex-direction: column; }
.phead { height: 30px; display: flex; align-items: center; padding: 0 6px 1px 6px; color: #444; flex: none; }
.phead h2 { font-size: 15px; letter-spacing: -0.2px; flex: 1; line-height: 20px; color: #1a1a1a; }
.phead svg + svg { margin-left: 9px; }
.searchrow { display: flex; align-items: center; padding-left: 3px; height: 26px; gap: 8px; }
.search { width: 172px; height: 24px; border: 1px solid #8f8f8f; background: #fff; display: flex; align-items: center; padding: 0 5px 0 5px; color: #555; }
.search em { flex: 1; padding-top: 1px; } .search svg + svg { margin-left: 11px; }
.listby { display: flex; height: 41px; margin-left: 15px; }
.lb { width: 32px; height: 40px; margin-top: 1px; display: flex; align-items: center; justify-content: center; border-bottom: 1px solid #c8c8c8; padding-bottom: 1px; }
.lb.on { border-bottom: 3px solid #0079c1; padding: 0 2px 0 0; }
.lb.last { width: 12px; justify-content: flex-end; padding-bottom: 6px; }
.dots { margin: 22px 0 0 12px; }
.contents h3 { font-size: 13px; margin: 12px 0 0 15px; line-height: 18px; height: 20px; -webkit-text-stroke: 0.25px #4c4c4c; letter-spacing: 0.25px; }
.tree { flex: 1; margin-top: 4px; overflow: hidden; }
.node { height: 24px; display: flex; align-items: center; padding-left: 14px; white-space: nowrap; }
.root { padding-left: 3px; } .root svg { margin: 0 5px 0 5px; } 
.tri { width: 6px; height: 6px; background: #555; clip-path: polygon(100% 0, 100% 100%, 0 100%); flex: none; }
.lay { flex: 1; height: 24px; margin-left: 3px; display: flex; align-items: center; border: 1px solid transparent; border-right: 0; padding-left: 1px; gap: 5px; overflow: hidden; }
.sel .lay { background: #c6dbef; border-color: #0079c1; }
.cb { width: 14px; height: 14px; border: 1px solid #888; border-radius: 2px; background: #fff; flex: none; display: flex; align-items: center; justify-content: center; }
.long { letter-spacing: -0.46px; } .sp2 { letter-spacing: -0.22px; } .sp3 { letter-spacing: -0.35px; }
.sym { height: 22px; padding: 7px 0 0 29px; }
.sym span { display: block; width: 7px; height: 7px; border-radius: 50%; border: 1px solid #222; }
.green { background: #1f8f1f; } .maroon { background: #7b1f3a; } .purple { background: #a0249c; }
.hscroll { display: flex; align-items: center; height: 18px; padding: 0 4px 0 4px; gap: 5px; }
.hscroll span { width: 162px; height: 9px; border-radius: 5px; background: #b3b3b3; margin: 0 4px 0 2px; }

.mapview { margin-left: 6px; width: 695px; height: 665px; display: flex; flex-direction: column; }
.vtabs { display: flex; height: 25px; border-bottom: 3px solid #d1d3d6; align-items: flex-end; justify-content: space-between; flex: none; }
.vtab { width: 77px; height: 22px; background: #d1d3d6; border-radius: 3px 3px 0 0; display: flex; align-items: center; padding: 2px 0 0 6px; gap: 5px; }
.vtab svg:last-child { margin-left: 4px; color: #555; }
.vchev { margin: 0 5px 6px 0; }
.canvas { height: 615px; background: #fff; border: 1px solid #d1d3d6; border-width: 0 1px; flex: none; }
.pts { marker-start: url(#dot); marker-mid: url(#dot); marker-end: url(#dot); }
.status { height: 25px; background: #f7f9f8; border: 1px solid #c8cacc; border-top: 0; display: flex; align-items: center; white-space: nowrap; padding-left: 5px; }
.scale { width: 100px; height: 22px; border: 1px solid #888; background: #fff; color: #111; display: flex; align-items: center; justify-content: space-between; padding: 0 4px 0 5px; letter-spacing: -0.65px; }
.down { border: 3px solid transparent; border-top: 4px solid #444; border-bottom: 0; }
.sep { width: 1px; height: 16px; background: #999; flex: none; }
.s1 { margin-left: 4px; } .a1 { margin-left: 7px; } .a2 { margin-left: 7px; } .a3 { margin-left: 7px; } .a4 { margin-left: 6px; } .a5 { margin-left: 7px; } .s2 { margin-left: 6px; }
.coords { margin-left: 46px; width: 160px; letter-spacing: -0.62px; padding-top: 1px; } .cchev { margin-left: 8px; } .s3 { margin-left: 44px; }
.selfeat { display: flex; align-items: center; gap: 4px; margin-left: 7px; width: 126px; color: #a0a0a0; height: 22px; letter-spacing: -0.48px; }
.s4 { margin-left: 4px; } .pause { margin-left: 8px; } .s5 { margin-left: 9px; } .refresh { margin-left: 6px; }

.right { margin-left: 6px; width: 350px; display: flex; flex-direction: column; }
.geo { position: relative; height: 645px; border: 1px solid #0079c1; border-radius: 4px 4px 0 0; background: #f7f9f8; display: flex; flex-direction: column; }
.geo .phead h2 { color: #0079c1; letter-spacing: -0.1px; }
.gtitle { height: 26px; display: flex; align-items: center; justify-content: space-between; padding: 0 6px 0 6px; }
.gtitle h1 { font-size: 14px; letter-spacing: -0.05px; line-height: 20px; }
.info { height: 40px; margin-top: 9px; background: #dfeef9; display: flex; align-items: center; padding: 0 8px 0 13px; flex: none; white-space: nowrap; }
.info p { flex: 1; margin-left: 17px; line-height: 15px; font-size: 11.5px; letter-spacing: -0.17px; }
.lnk { color: #1c5a2c; } .dimx { color: #777; }
.ptabs { height: 28px; display: flex; align-items: flex-start; padding: 2px 6px 0 9px; font-size: 12.5px; }
.ptabs span { height: 22px; line-height: 21px; } .ptabs .on { border-bottom: 2px solid #0079c1; width: 69px; -webkit-text-stroke: 0.25px #4c4c4c; letter-spacing: 0.1px; }
.ptabs .env { margin-left: 10px; flex: 1; letter-spacing: -0.25px; } .ptabs svg { margin-top: 2px; }
.form { padding: 6px 8px 0 18px; }
.form label { display: block; height: 17px; line-height: 19px; letter-spacing: -0.3px; }
.frow { display: flex; align-items: center; height: 22px; margin-bottom: 2px; }
.inp { height: 22px; border: 1px solid #8f8f8f; background: #fff; line-height: 20px; padding-left: 4px; letter-spacing: -0.4px; }
.combo { width: 257px; display: flex; align-items: center; justify-content: space-between; padding-right: 4px; }
.black { color: #111; }
.loc { width: 296px; } .full { width: 322px; }
.fold { margin-left: 7px; } .pen { margin-left: 12px; } .pch { margin-left: 4px; }
.actions { display: flex; align-items: center; height: 20px; margin-top: 6px; }
.actions .ld { margin-left: 6px; width: 44px; } .actions .sv { margin-left: 6px; width: 43px; color: #c4c4c4; } .actions .rm { margin-left: 8px; }
.sqlrow { display: flex; align-items: center; height: 20px; margin-top: 14px; }
.chk { margin-left: 7px; } .sql { margin-left: auto; } .toggle { width: 26px; height: 14px; border-radius: 7px; background: #8f8f8f; margin-left: 4px; padding: 1px; }
.toggle::before { content: ""; display: block; width: 12px; height: 12px; border-radius: 6px; background: #fff; }
.gear { margin: 0 4px 0 9px; }
.clauses { height: 78px; width: 322px; border: 1px solid #666; margin-top: 2px; padding: 2px 2px 0 2px; }
.clause { height: 37px; border: 1px solid #666; outline: 2px solid #dcdcdc; display: flex; align-items: center; padding-right: 9px; margin: 1px; }
.grip { width: 4px; height: 35px; background: #d9d9d9; } .where { margin-left: 5px; color: #222; width: 50px; letter-spacing: -0.45px; }
.field { width: 82px; height: 24px; border: 1px solid #8f8f8f; background: #fff; display: flex; align-items: center; padding: 0 4px 0 5px; color: #8a8a8a; margin-right: auto; white-space: nowrap; letter-spacing: -0.2px; }
.field em { width: 66px; flex: none; } 
.add { display: flex; align-items: center; justify-content: center; gap: 7px; height: 36px; padding-top: 2px; letter-spacing: -0.2px; }
.sect { height: 24px; display: flex; align-items: center; padding-left: 6px; gap: 6px; font-size: 13px; letter-spacing: -0.1px; -webkit-text-stroke: 0.25px #4c4c4c; }
.form + .sect { margin-top: 8px; }
.spacer { flex: 1; }
.run { width: 85px; height: 24px; border: 1px solid #555; border-radius: 2px; background: #fff; align-self: flex-end; margin-right: 6px; display: flex; align-items: center; padding-left: 11px; flex: none; }
.run span { margin-left: 7px; flex: 1; } .run svg:last-child { margin-right: 3px; }
.done { height: 44px; margin: 6px 3px 2px 4px; background: #e3efe2; display: flex; align-items: center; flex: none; padding: 0 7px 0 13px; white-space: nowrap; }
.done div { flex: 1; margin-left: 17px; line-height: 18px; letter-spacing: -0.42px; padding-top: 1px; }
.links { color: #4f8552; } .links a + a { margin-left: 8px; }
.mark { position: absolute; border: 5px solid #ee1c25; }
.m1 { left: 62px; top: 27px; width: 229px; height: 33px; } .m2 { left: 4px; top: 180px; width: 347px; height: 85px; }
.ptabsb { display: flex; height: 22px; align-items: flex-start; }
.cat { line-height: 22px; margin-left: 6px; width: 47px; }
.gp { width: 90px; height: 21px; line-height: 22px; border: 1px solid #0079c1; border-top: 0; background: #f7f9f8; border-radius: 0 0 3px 3px; color: #0070b8; text-align: center; margin-top: -1px; position: relative; }
```
